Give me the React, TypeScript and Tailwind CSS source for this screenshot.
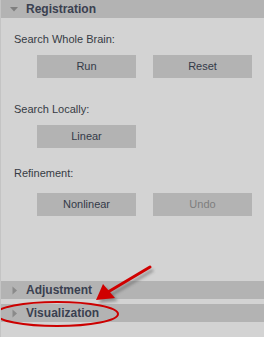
import type { ReactNode } from 'react';

function SectionBar({ title, open }: { title: string; open?: boolean }) {
  return (
    <div className="flex h-[18px] items-center bg-[#b3b3b3] pl-[9px]">
      {open ? (
        <svg width="8" height="6" viewBox="0 0 8 6" className="mr-[8px]">
          <path d="M0 1 L8 1 L4 5.5 Z" fill="#7f7f7f" />
        </svg>
      ) : (
        <svg width="6" height="9" viewBox="0 0 6 9" className="ml-[2px] mr-[8px]">
          <path d="M0.5 0.5 L5 4.5 L0.5 8.5 Z" fill="#8a8a8a" />
        </svg>
      )}
      <span className="text-[12px] font-bold leading-none text-[#3a4050]">{title}</span>
    </div>
  );
}

function Btn({ children, disabled }: { children: ReactNode; disabled?: boolean }) {
  return (
    <button
      className={
        disabled
          ? 'flex h-[23px] w-[99px] items-center justify-center bg-[#b3b3b3] text-[11px] text-[#7e7e7e]'
          : 'flex h-[23px] w-[99px] items-center justify-center bg-[#b3b3b3] text-[11px] text-[#333a48]'
      }
    >
      {children}
    </button>
  );
}

function Label({ children }: { children: ReactNode }) {
  return <div className="pl-[13px] text-[11px] leading-[14px] text-[#363b44]">{children}</div>;
}

export default function App() {
  return (
    <div
      className="relative flex h-[337px] w-[264px] flex-col overflow-hidden border-l border-[#c4c4c4] bg-[#d3d3d3]"
      style={{ fontFamily: '"Liberation Sans", Arial, sans-serif' }}
    >
      <SectionBar title="Registration" open />

      <div className="mt-[14px]">
        <Label>Search Whole Brain:</Label>
        <div className="mt-[9px] flex gap-[17px] pl-[36px]">
          <Btn>Run</Btn>
          <Btn>Reset</Btn>
        </div>

        <div className="mt-[24px]">
          <Label>Search Locally:</Label>
        </div>
        <div className="mt-[9px] flex pl-[36px]">
          <Btn>Linear</Btn>
        </div>

        <div className="mt-[18px]">
          <Label>Refinement:</Label>
        </div>
        <div className="mt-[13px] flex gap-[17px] pl-[36px]">
          <Btn>Nonlinear</Btn>
          <Btn disabled>Undo</Btn>
        </div>
      </div>

      <div className="flex-1" />
      <SectionBar title="Adjustment" />
      <div className="h-[5px]" />
      <SectionBar title="Visualization" />
      <div className="h-[15px]" />

      {/* annotation: arrow + ellipse */}
      <svg className="pointer-events-none absolute left-0 top-0" width="264" height="337" viewBox="0 0 264 337">
        <defs>
          <filter id="sh" x="-20%" y="-20%" width="140%" height="140%">
            <feGaussianBlur stdDeviation="1.5" />
          </filter>
        </defs>
        <g opacity="0.45" filter="url(#sh)" transform="translate(3 3)">
          <path d="M149 267 L107 292" stroke="#444" strokeWidth="3" fill="none" />
          <path d="M95 300 L102 284 L114 298 Z" fill="#444" />
        </g>
        <path d="M149 267 L107 292" stroke="#d00000" strokeWidth="3" strokeLinecap="round" fill="none" />
        <path d="M95 300 L102 284 L114 298 Z" fill="#d00000" />
        <ellipse cx="56" cy="314" rx="61" ry="12" stroke="#cc0000" strokeWidth="2" fill="none" />
      </svg>
    </div>
  );
}
